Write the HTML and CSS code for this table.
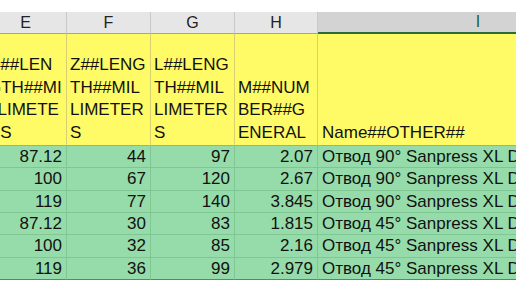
FILE: index.html
```html
<!DOCTYPE html>
<html>
<head>
<meta charset="utf-8">
<link rel="stylesheet" href="styles.css">
</head>
<body>
<div class="page">
  <div class="sheet">
    <div class="colhead">E</div>
    <div class="colhead">F</div>
    <div class="colhead">G</div>
    <div class="colhead">H</div>
    <div class="colhead sel">I</div>

    <div class="hcell"><span>D##LEN</span><span>GTH##MI</span><span>LLIMETE</span><span>RS</span></div>
    <div class="hcell"><span>Z##LENG</span><span>TH##MIL</span><span>LIMETER</span><span>S</span></div>
    <div class="hcell"><span>L##LENG</span><span>TH##MIL</span><span>LIMETER</span><span>S</span></div>
    <div class="hcell"><span>M##NUM</span><span>BER##G</span><span>ENERAL</span></div>
    <div class="hcell last"><span>Name##OTHER##</span></div>

    <div class="cell num">87.12</div><div class="cell num">44</div><div class="cell num">97</div><div class="cell num">2.07</div><div class="cell txt">Отвод 90° Sanpress XL DN 15</div>
    <div class="cell num">100</div><div class="cell num">67</div><div class="cell num">120</div><div class="cell num">2.67</div><div class="cell txt">Отвод 90° Sanpress XL DN 18</div>
    <div class="cell num">119</div><div class="cell num">77</div><div class="cell num">140</div><div class="cell num">3.845</div><div class="cell txt">Отвод 90° Sanpress XL DN 22</div>
    <div class="cell num">87.12</div><div class="cell num">30</div><div class="cell num">83</div><div class="cell num">1.815</div><div class="cell txt">Отвод 45° Sanpress XL DN 15</div>
    <div class="cell num">100</div><div class="cell num">32</div><div class="cell num">85</div><div class="cell num">2.16</div><div class="cell txt">Отвод 45° Sanpress XL DN 18</div>
    <div class="cell num lastrow">119</div><div class="cell num lastrow">36</div><div class="cell num lastrow">99</div><div class="cell num lastrow">2.979</div><div class="cell txt lastrow">Отвод 45° Sanpress XL DN 22</div>
  </div>
</div>
</body>
</html>
```
FILE: styles.css
```css
html, body {
  margin: 0;
  padding: 0;
  background: #ffffff;
  overflow: hidden;
}
body {
  width: 516px;
  height: 290px;
  font-family: "Liberation Sans", Arial, sans-serif;
  color: #111111;
}
.page {
  padding-top: 12px;
  margin-left: -15px;
}
.sheet {
  display: grid;
  grid-template-columns: 82px 84px 84px 83px 320px;
  grid-template-rows: 22px 112px 22px 23px 22px 22px 23px 22px;
  width: 673px;
}
.colhead {
  box-sizing: border-box;
  background: #e6e6e6;
  border-right: 1px solid #c9c9c9;
  border-bottom: 1px solid #b8aa4a;
  font-size: 16px;
  line-height: 21px;
  text-align: center;
  color: #222222;
}
.colhead.sel {
  background: #d3d3d3;
  border-bottom: 2px solid #2a6b3c;
  border-right: none;
  color: #1f5c33;
  line-height: 20px;
}
.hcell {
  box-sizing: border-box;
  background: #fffb66;
  border-right: 1px solid #d8d070;
  border-bottom: 1px solid #d4a534;
  display: flex;
  flex-direction: column;
  justify-content: flex-end;
  padding: 0 3px 1px 3px;
  font-size: 17px;
  line-height: 22.4px;
  white-space: nowrap;
  overflow: hidden;
}
.hcell.last {
  border-right: none;
  padding-left: 4px;
}
.cell {
  box-sizing: border-box;
  background: #96dcaa;
  border-right: 1px solid #7fc693;
  border-bottom: 1px solid #7fc693;
  font-size: 17px;
  display: flex;
  align-items: center;
  white-space: nowrap;
  overflow: hidden;
}
.num {
  justify-content: flex-end;
  padding-right: 4px;
}
.txt {
  justify-content: flex-start;
  padding-left: 4px;
  border-right: none;
}
.lastrow {
  border-bottom: 1px solid #3c9a58;
}
```
